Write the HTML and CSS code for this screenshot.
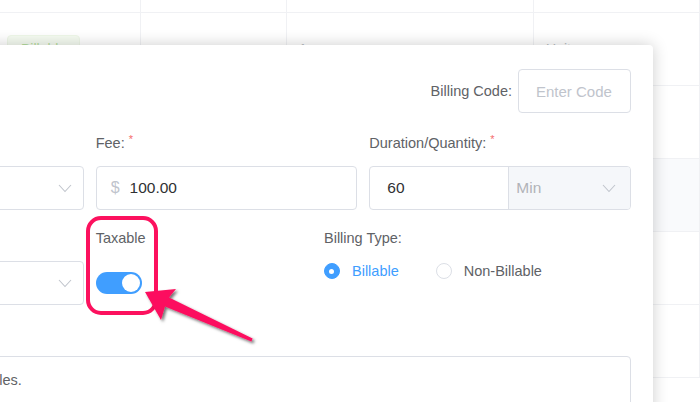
FILE: index.html
```html
<!DOCTYPE html>
<html>
<head>
<meta charset="utf-8">
<link rel="stylesheet" href="styles.css">
</head>
<body>
<div class="table">
  <div class="trow thead"><div class="cell"></div><div class="cell"></div><div class="cell"></div><div class="cell"></div></div>
  <div class="trow"><div class="cell"><span class="badge">Billable</span></div><div class="cell"></div><div class="cell">1</div><div class="cell">Unit</div></div>
  <div class="trow"><div class="cell"></div><div class="cell"></div><div class="cell"></div><div class="cell"></div></div>
  <div class="trow hover"><div class="cell"></div><div class="cell"></div><div class="cell"></div><div class="cell"></div></div>
  <div class="trow"><div class="cell"></div><div class="cell"></div><div class="cell"></div><div class="cell"></div></div>
  <div class="trow"><div class="cell"></div><div class="cell"></div><div class="cell"></div><div class="cell"></div></div>
</div>

<div class="modal">
  <div class="code-row">
    <span class="label">Billing Code:</span>
    <input class="code-input" type="text" placeholder="Enter Code">
  </div>

  <div class="grid3">
    <div class="item">
      <div class="label"></div>
      <div class="control select">
        <span class="val"></span>
        <svg class="chev" width="14" height="9" viewBox="0 0 14 9"><path d="M1 1l6 6.5L13 1" fill="none" stroke="#c0c4cc" stroke-width="1.1"/></svg>
      </div>
    </div>
    <div class="item">
      <div class="label">Fee:<sup class="req">*</sup></div>
      <div class="control fee">
        <span class="dollar">$</span><span class="val">100.00</span>
      </div>
    </div>
    <div class="item">
      <div class="label">Duration/Quantity:<sup class="req">*</sup></div>
      <div class="control dur">
        <span class="dur-num">60</span>
        <span class="dur-unit"><span>Min</span>
          <svg class="chev" width="14" height="9" viewBox="0 0 14 9"><path d="M1 1l6 6.5L13 1" fill="none" stroke="#c0c4cc" stroke-width="1.1"/></svg>
        </span>
      </div>
    </div>
  </div>

  <div class="row3">
    <div class="item">
      <div class="label"></div>
      <div class="control select">
        <span class="val"></span>
        <svg class="chev" width="14" height="9" viewBox="0 0 14 9"><path d="M1 1l6 6.5L13 1" fill="none" stroke="#c0c4cc" stroke-width="1.1"/></svg>
      </div>
    </div>
    <div class="item">
      <div class="label">Taxable</div>
      <div class="switch-wrap"><span class="switch"><span class="knob"></span></span></div>
    </div>
    <div class="item">
      <div class="label">Billing Type:</div>
      <div class="radios">
        <span class="radio checked"><span class="dot"></span><span class="rtext">Billable</span></span>
        <span class="radio"><span class="dot"></span><span class="rtext">Non-Billable</span></span>
      </div>
    </div>
  </div>

  <div class="notes">Applies to default billing rules.</div>
</div>

<svg class="annot" width="700" height="402" viewBox="0 0 700 402">
  <defs>
    <filter id="sh" x="-20%" y="-20%" width="140%" height="140%">
      <feDropShadow dx="2" dy="2" stdDeviation="1.4" flood-color="#000" flood-opacity="0.55"/>
    </filter>
  </defs>
  <rect x="88" y="218" width="68" height="95" rx="13" ry="13" fill="none" stroke="#fc115e" stroke-width="4"/>
  <polygon filter="url(#sh)" fill="#fc115e" points="145,292 176,289 169,297.5 252.6,338.6 251.4,341.4 165,306.6 161,320"/>
</svg>
</body>
</html>
```

FILE: styles.css
```css
* { box-sizing: border-box; }

body {
  margin: 0;
  width: 700px;
  height: 402px;
  overflow: hidden;
  position: relative;
  background: #fff;
  font-family: "Liberation Sans", Arial, sans-serif;
  font-size: 14.5px;
  color: #606266;
}

/* background table */
.table {
  display: flex;
  flex-direction: column;
}
.trow {
  display: grid;
  grid-template-columns: 141px 146px 247px 166px;
  height: 73px;
  border-bottom: 1px solid #f0f1f4;
}
.trow.thead { height: 13px; }
.trow.hover { background: #f9fafc; }
.cell {
  border-right: 1px solid #f0f1f4;
  display: flex;
  align-items: center;
  padding-left: 12px;
  color: #b8bbc0;
  font-size: 14px;
}
.trow .cell:first-child { padding-left: 7px; }
.badge {
  display: inline-block;
  padding: 0 13px;
  height: 28px;
  line-height: 26px;
  border: 1px solid #eef7e8;
  background: #f5fbf1;
  border-radius: 4px;
  color: #b5dea0;
}

/* modal */
.modal {
  position: absolute;
  left: -200px;
  top: 45px;
  width: 853px;
  height: 420px;
  background: #fff;
  border-radius: 4px;
  box-shadow: 0 0 16px rgba(0, 0, 0, 0.2);
  padding: 24px 22px 0;
}

.label {
  line-height: 20px;
  height: 20px;
  color: #606266;
  white-space: nowrap;
}
.req {
  color: #f56c6c;
  font-size: 11px;
  vertical-align: top;
  position: relative;
  top: -4px;
  margin-left: 4px;
}

.code-row {
  display: flex;
  justify-content: flex-end;
  align-items: center;
  gap: 6px;
}
.code-input {
  width: 113px;
  height: 44px;
  border: 1px solid #dcdfe6;
  border-radius: 4px;
  padding: 0 17px;
  font-family: inherit;
  font-size: 15px;
  color: #303133;
  outline: none;
}
.code-input::placeholder { color: #c0c4cc; }

.grid3 {
  display: grid;
  grid-template-columns: repeat(3, 1fr);
  column-gap: 12px;
  margin-top: 20px;
}
.item .label { margin-bottom: 13px; }

.control {
  height: 44px;
  border: 1px solid #dcdfe6;
  border-radius: 4px;
  display: flex;
  align-items: center;
  font-size: 15.5px;
  color: #303133;
}
.select {
  justify-content: space-between;
  padding: 0 11px 0 15px;
}
.chev { display: block; }
.fee { padding-left: 14px; }
.dollar { color: #c0c4cc; margin-right: 10px; font-size: 16px; }

.dur { overflow: hidden; }
.dur-num {
  width: 139px;
  height: 100%;
  display: flex;
  align-items: center;
  padding-left: 17px;
  border-right: 1px solid #dcdfe6;
}
.dur-unit {
  flex: 1;
  height: 100%;
  background: #f5f7fa;
  display: flex;
  align-items: center;
  justify-content: space-between;
  padding: 0 14px 0 7px;
  color: #b1b3b8;
}

.row3 {
  display: grid;
  grid-template-columns: 261.67px 216.33px 1fr;
  column-gap: 12px;
  margin-top: 18px;
}
.switch-wrap {
  height: 44px;
  display: flex;
  align-items: center;
}
.switch {
  width: 46px;
  height: 22px;
  border-radius: 11px;
  background: #409eff;
  position: relative;
  display: block;
}
.knob {
  position: absolute;
  right: 2px;
  top: 2px;
  width: 18px;
  height: 18px;
  border-radius: 50%;
  background: #fff;
}

.radios {
  display: flex;
  align-items: center;
  height: 20px;
}
.radio {
  display: flex;
  align-items: center;
  margin-right: 37px;
}
.radio .dot {
  width: 16px;
  height: 16px;
  border-radius: 50%;
  border: 1px solid #dcdfe6;
  background: #fff;
  margin-right: 12px;
  position: relative;
}
.radio.checked .dot {
  background: #409eff;
  border-color: #409eff;
}
.radio.checked .dot::after {
  content: "";
  position: absolute;
  left: 50%;
  top: 50%;
  width: 5px;
  height: 5px;
  margin: -2.5px 0 0 -2.5px;
  border-radius: 50%;
  background: #fff;
}
.radio.checked .rtext { color: #409eff; }

.notes {
  margin-top: 51px;
  height: 90px;
  border: 1px solid #dcdfe6;
  border-radius: 4px;
  padding: 13px 15px 13px 7px;
  line-height: 20px;
  color: #606266;
}

.annot {
  position: absolute;
  left: 0;
  top: 0;
  pointer-events: none;
}
```
